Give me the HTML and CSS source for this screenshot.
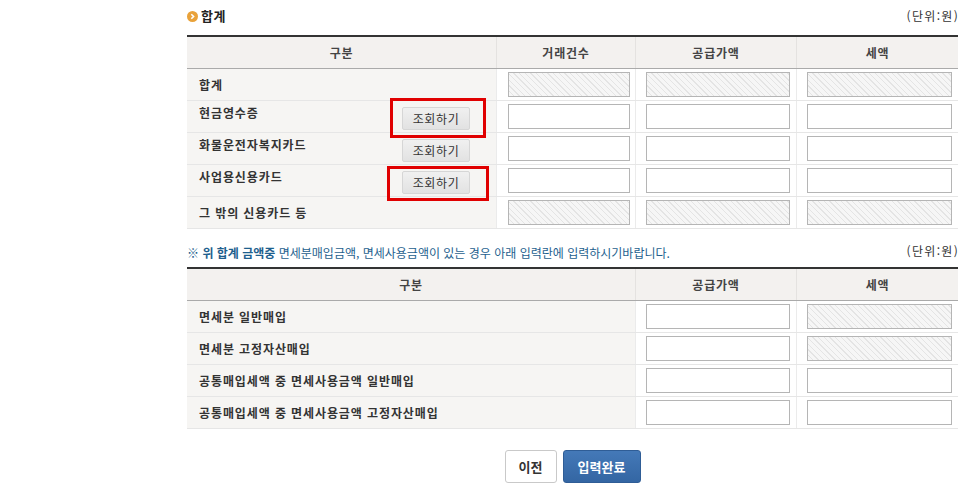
FILE: index.html
```html
<!DOCTYPE html>
<html lang="ko">
<head>
<meta charset="utf-8">
<link rel="stylesheet" href="styles.css">
</head>
<body>
<div class="wrap">
  <div class="titlebar">
    <h2 class="title"><span class="bullet"><svg width="11" height="11" viewBox="0 0 11 11"><circle cx="5.5" cy="5.5" r="5.5" fill="#e9a23a"/><path d="M4.3 3.2 L6.6 5.5 L4.3 7.8" fill="none" stroke="#fff" stroke-width="1.6"/></svg></span>합계</h2>
    <span class="unit">(단위:원)</span>
  </div>

  <div class="grid g4">
    <div class="row head">
      <div class="hc">구분</div><div class="hc">거래건수</div><div class="hc">공급가액</div><div class="hc last">세액</div>
    </div>
    <div class="row">
      <div class="lab"><span class="lt mid">합계</span></div>
      <div class="ic"><span class="inp dis"></span></div>
      <div class="ic"><span class="inp dis"></span></div>
      <div class="ic"><span class="inp dis"></span></div>
    </div>
    <div class="row">
      <div class="lab"><span class="lt">현금영수증</span><button class="qbtn">조회하기</button></div>
      <div class="ic"><span class="inp"></span></div>
      <div class="ic"><span class="inp"></span></div>
      <div class="ic"><span class="inp"></span></div>
    </div>
    <div class="row">
      <div class="lab"><span class="lt">화물운전자복지카드</span><button class="qbtn">조회하기</button></div>
      <div class="ic"><span class="inp"></span></div>
      <div class="ic"><span class="inp"></span></div>
      <div class="ic"><span class="inp"></span></div>
    </div>
    <div class="row">
      <div class="lab"><span class="lt">사업용신용카드</span><button class="qbtn">조회하기</button></div>
      <div class="ic"><span class="inp"></span></div>
      <div class="ic"><span class="inp"></span></div>
      <div class="ic"><span class="inp"></span></div>
    </div>
    <div class="row">
      <div class="lab"><span class="lt mid">그 밖의 신용카드 등</span></div>
      <div class="ic"><span class="inp dis"></span></div>
      <div class="ic"><span class="inp dis"></span></div>
      <div class="ic"><span class="inp dis"></span></div>
    </div>
    <div class="mark m1"></div>
    <div class="mark m2"></div>
  </div>

  <div class="notebar">
    <p class="note">※ <b>위 합계 금액중</b> 면세분매입금액, 면세사용금액이 있는 경우 아래 입력란에 입력하시기바랍니다.</p>
    <span class="unit">(단위:원)</span>
  </div>

  <div class="grid g3">
    <div class="row head">
      <div class="hc">구분</div><div class="hc">공급가액</div><div class="hc last">세액</div>
    </div>
    <div class="row">
      <div class="lab"><span class="lt mid">면세분 일반매입</span></div>
      <div class="ic"><span class="inp"></span></div>
      <div class="ic"><span class="inp dis"></span></div>
    </div>
    <div class="row">
      <div class="lab"><span class="lt mid">면세분 고정자산매입</span></div>
      <div class="ic"><span class="inp"></span></div>
      <div class="ic"><span class="inp dis"></span></div>
    </div>
    <div class="row">
      <div class="lab"><span class="lt mid">공통매입세액 중 면세사용금액 일반매입</span></div>
      <div class="ic"><span class="inp"></span></div>
      <div class="ic"><span class="inp"></span></div>
    </div>
    <div class="row">
      <div class="lab"><span class="lt mid">공통매입세액 중 면세사용금액 고정자산매입</span></div>
      <div class="ic"><span class="inp"></span></div>
      <div class="ic"><span class="inp"></span></div>
    </div>
  </div>

  <div class="actions">
    <button class="btn prev">이전</button>
    <button class="btn done">입력완료</button>
  </div>
</div>
</body>
</html>
```

FILE: styles.css
```css
* { box-sizing: border-box; }
html, body { margin: 0; padding: 0; background: #fff; }
body {
  font-family: "Noto Sans CJK KR", "Noto Sans", sans-serif;
  font-size: 12px;
  color: #333;
}
.wrap {
  width: 771px;
  margin-left: 187px;
}
.titlebar {
  height: 35px;
  display: flex;
  align-items: center;
  justify-content: space-between;
  padding-bottom: 3px;
}
.title {
  margin: 0;
  font-size: 13px;
  font-weight: bold;
  color: #222;
  display: flex;
  align-items: center;
  gap: 3px;
  line-height: 16px;
  letter-spacing: 0.5px;
}
.bullet { display: inline-flex; width: 11px; height: 11px; }
.unit { font-size: 12px; color: #333; line-height: 16px; letter-spacing: 1.3px; margin-right: -1px; }

.grid { position: relative; border-top: 2px solid #333; }
.row {
  display: grid;
  height: 32px;
  border-bottom: 1px solid #e6e6e6;
}
.g4 .row { grid-template-columns: 310px 139px 161px 161px; }
.g3 .row { grid-template-columns: 449px 161px 161px; }
.row.head {
  height: 32px;
  background: #f3f1ef;
  border-bottom: 1px solid #aaa;
}
.hc {
  display: flex;
  align-items: center;
  justify-content: center;
  font-weight: bold;
  color: #444;
  letter-spacing: 0.8px;
  border-right: 1px solid #e4e2e0;
}
.hc.last { border-right: 0; }
.lab {
  background: #f6f5f3;
  display: flex;
  justify-content: space-between;
  align-items: flex-start;
  padding-left: 12px;
  padding-right: 26px;
  border-right: 1px solid #ebebeb;
}
.lt {
  font-weight: bold;
  color: #333;
  line-height: 16px;
  margin-top: 4px;
  letter-spacing: 0.9px;
}
.lt.mid { margin-top: 8px; }
.qbtn {
  margin-top: 6px;
  width: 68px;
  height: 23px;
  border: 1px solid #d6d6d6;
  border-radius: 2px;
  background: linear-gradient(#f0f0f0, #e2e2e2);
  font-family: inherit;
  font-size: 12px;
  letter-spacing: 0.6px;
  color: #333;
  padding: 0;
  line-height: 20px;
}
.ic {
  display: flex;
  align-items: center;
  padding-left: 10px;
  padding-right: 6px;
  border-right: 1px solid #ebebeb;
}
.ic:last-child { border-right: 0; }
.inp {
  display: block;
  width: 100%;
  height: 25px;
  border: 1px solid #b5b5b5;
  background: #fff;
}
.g4 .row .ic:nth-child(2) { padding-left: 11px; padding-right: 5px; }
.inp.dis {
  background: repeating-linear-gradient(45deg, #f6f6f6 0 3px, #e4e4e4 3px 4px);
}
.mark {
  position: absolute;
  border: 3px solid #e00000;
  pointer-events: none;
}
.m1 { left: 203px; top: 61px; width: 96px; height: 40px; }
.m2 { left: 200px; top: 129px; width: 102px; height: 35px; }

.notebar {
  height: 38px;
  display: flex;
  align-items: flex-end;
  justify-content: space-between;
  padding-bottom: 6px;
}
.note {
  margin: 0;
  color: #1e5f8e;
  font-size: 12px;
  line-height: 16px;
  letter-spacing: 0;
}
.note b { font-weight: bold; }
.notebar .unit { margin-bottom: 2px; }

.actions {
  display: flex;
  justify-content: center;
  gap: 6px;
  margin-top: 21px;
}
.btn {
  height: 33px;
  border-radius: 3px;
  font-family: inherit;
  font-size: 13px;
  font-weight: bold;
  padding: 0;
}
.prev {
  width: 52px;
  background: #fff;
  border: 1px solid #c9c9c9;
  color: #333;
}
.done {
  width: 78px;
  background: linear-gradient(#4479b8, #3466a3);
  border: 1px solid #2f5d96;
  color: #fff;
}
```
